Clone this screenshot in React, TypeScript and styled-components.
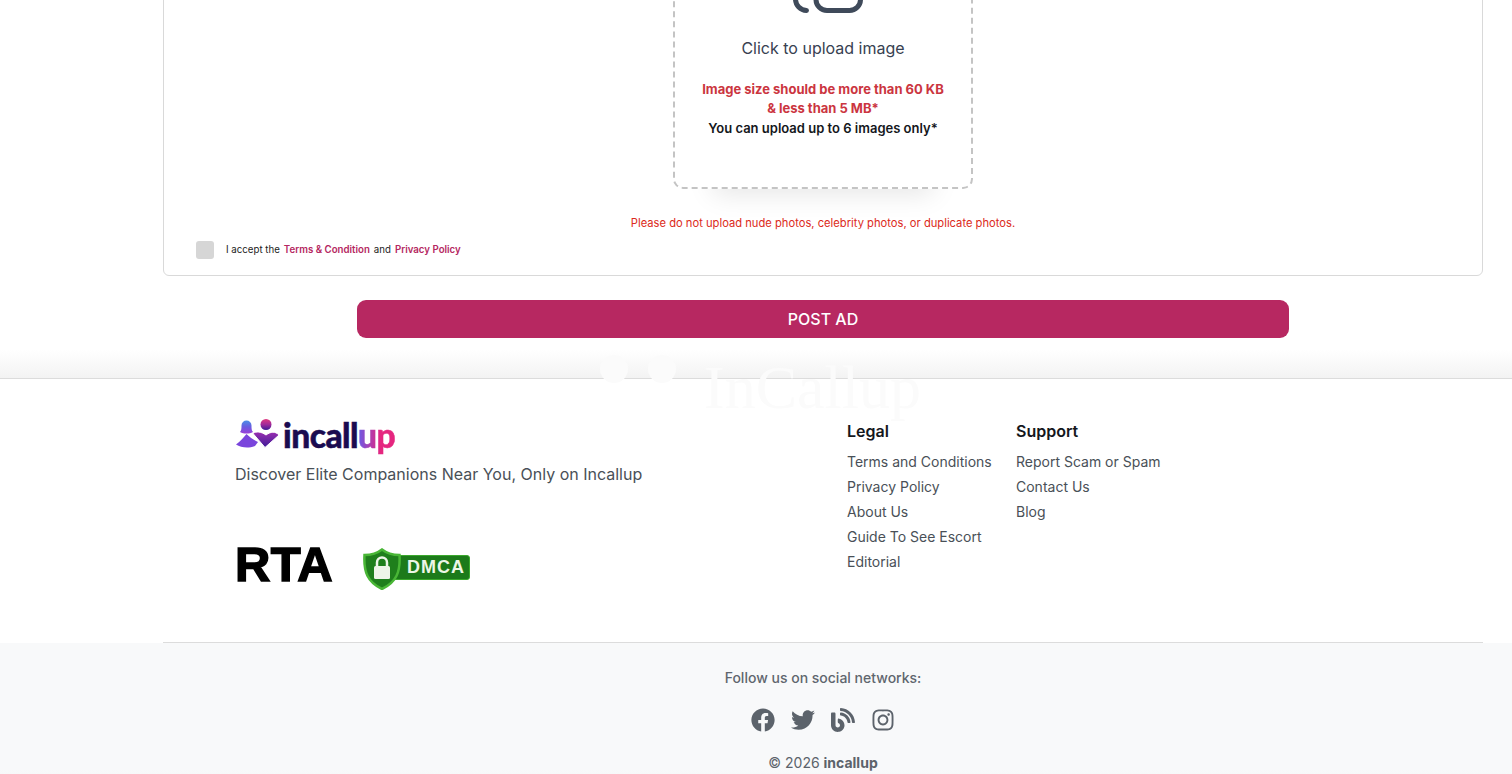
import React from "react";
import styled, { createGlobalStyle } from "styled-components";
import { FaFacebook, FaTwitter, FaBlog, FaInstagram } from "react-icons/fa";

const Global = createGlobalStyle`
  html, body { margin: 0; padding: 0; background: #fff; overflow: hidden; }
  body { font-family: Inter, "Liberation Sans", sans-serif; }
  * { box-sizing: border-box; }
`;

const Page = styled.div`
  height: 774px;
  overflow: hidden;
  background: #fff;
`;

const Main = styled.main`
  margin: -100px 29px 0 163px;
`;

const Panel = styled.section`
  height: 376px;
  border: 1px solid #d9d9d9;
  border-radius: 6px;
  padding: 0 32px;
  display: flex;
  flex-direction: column;
`;

const UploadBox = styled.div`
  align-self: center;
  width: 300px;
  height: 288px;
  flex: none;
  border: 2px dashed #c4c4c4;
  border-radius: 10px;
  box-shadow: 0 45px 25px -40px rgba(0, 0, 0, 0.1);
  display: flex;
  flex-direction: column;
  align-items: center;
  text-align: center;
  padding: 0 24px;
`;

const UploadIcon = styled.svg`
  width: 80px;
  height: 80px;
  margin-top: 38px;
  flex: none;
  color: #3f4a5a;
`;

const UploadLabel = styled.div`
  margin-top: 15px;
  font-size: 16px;
  line-height: 24px;
  color: #374151;
`;

const SizeNote = styled.div`
  margin-top: 20px;
  font-size: 13px;
  font-weight: 700;
  line-height: 19px;
  color: #cb3540;
`;

const CountNote = styled.div`
  margin-top: 1px;
  font-size: 13px;
  font-weight: 600;
  line-height: 19.500px;
  color: #14171c;
`;

const Warning = styled.p`
  margin: 26px 0 0;
  text-align: center;
  font-size: 11.200px;
  line-height: 16px;
  color: #dc2a20;
`;

const Consent = styled.label`
  margin-top: 10px;
  display: flex;
  align-items: center;
  gap: 12px;
  font-size: 9.700px;
  color: #222;
`;

const Check = styled.span`
  width: 18px;
  height: 18px;
  border-radius: 3px;
  background: #d6d6d6;
`;

const ConsentText = styled.span`
  display: flex;
  gap: 4px;
  line-height: 12px;
`;

const ConsentLink = styled.a`
  color: #b52761;
  font-weight: 600;
`;

const PostButton = styled.button`
  display: block;
  width: 932px;
  height: 38px;
  margin: 24px auto 0;
  border: 0;
  border-radius: 9px;
  background: #b72861;
  color: #fff;
  font: 500 16px Inter, sans-serif;
`;

const Band = styled.div`
  height: 40px;
  background: linear-gradient(to bottom, #fff 30%, #f3f3f3 100%);
`;

const FooterWrap = styled.footer`
  position: relative;
  border-top: 1px solid #dcdcdc;
`;

const Watermark = styled.div`
  position: absolute;
  left: 600px;
  top: -24px;
  display: flex;
  align-items: flex-start;
  color: #fbfbfb;
`;

const Head = styled.span<{ $gap: number }>`
  width: 28px;
  height: 28px;
  border-radius: 50%;
  background: #fbfbfb;
  margin-right: ${(p) => p.$gap}px;
`;

const WatermarkText = styled.span`
  font: 62px/70px "Liberation Serif", serif;
  margin-top: -3px;
`;

const FooterTop = styled.div`
  position: relative;
  height: 263px;
  padding: 37px 0 0 235px;
  display: flex;
`;

const Brand = styled.div`
  width: 612px;
  flex: none;
`;

const Logo = styled.div`
  display: flex;
  align-items: center;
  height: 38px;
  gap: 4px;
`;

const LogoMark = styled.svg`
  width: 44px;
  height: 32px;
  flex: none;
`;

const LogoWord = styled.span`
  font: 900 33.500px/38px Lato, Inter, sans-serif;
  letter-spacing: -0.5px;
  color: #1b0b50;
  -webkit-text-stroke: 0.5px #1b0b50;
`;

const LogoUp = styled.span`
  background: linear-gradient(90deg, #6a5be8 0%, #e5267f 60%);
  -webkit-background-clip: text;
  background-clip: text;
  color: transparent;
  -webkit-text-stroke: 0.5px transparent;
`;

const Tagline = styled.p`
  margin: 8px 0 0;
  font-size: 16px;
  line-height: 24px;
  color: #495057;
`;

const Badges = styled.div`
  margin-top: 52px;
  display: flex;
  align-items: center;
  gap: 27px;
`;

const Rta = styled.span`
  font: 900 49px/40px "Liberation Sans", sans-serif;
  color: #000;
  letter-spacing: 0.3px;
  -webkit-text-stroke: 1.500px #000;
  width: 100px;
`;

const Dmca = styled.div`
  position: relative;
  width: 108px;
  height: 42px;
  margin-top: 10px;
`;

const DmcaTag = styled.span`
  position: absolute;
  left: 20px;
  top: 7px;
  right: 0;
  height: 25px;
  background: #1c7a1a;
  border: 1.500px solid #3aa82c;
  border-radius: 3px;
  color: #edf6e6;
  font: 700 18px/23px "Liberation Sans", sans-serif;
  padding-left: 24px;
  letter-spacing: 1px;
`;

const Shield = styled.svg`
  position: absolute;
  left: 0;
  top: 0;
  width: 40px;
  height: 42px;
`;

const LinkColumn = styled.nav<{ $w: number }>`
  width: ${(p) => p.$w}px;
  flex: none;
`;

const ColumnTitle = styled.h4`
  margin: 1px 0 4px;
  font-size: 16px;
  font-weight: 600;
  line-height: 28px;
  color: #14171c;
`;

const FooterLink = styled.a`
  display: block;
  font-size: 14px;
  line-height: 25px;
  color: #495057;
`;

const Rule = styled.div`
  margin: 0 29px 0 163px;
  height: 1px;
  background: #dcdcdc;
`;

const FooterBottom = styled.div`
  background: linear-gradient(to bottom, #f8f9fa 90%, #f6f7f8 100%);
  height: 140px;
  padding-left: 163px;
  padding-right: 29px;
  padding-top: 25px;
  display: flex;
  flex-direction: column;
  align-items: center;
`;

const Follow = styled.div`
  font-size: 14px;
  font-weight: 500;
  line-height: 20px;
  color: #5f666e;
`;

const Socials = styled.div`
  margin-top: 20px;
  display: flex;
  gap: 16px;
  color: #5c636b;
`;

const Copy = styled.div`
  margin-top: 21px;
  font-size: 14px;
  line-height: 20px;
  color: #5c636b;
`;

export default function App() {
  return (
    <Page>
      <Global />
      <Main>
        <Panel>
          <UploadBox>
            <UploadIcon viewBox="0 0 80 80" fill="none" stroke="currentColor" strokeWidth="5" strokeLinecap="round">
              <rect x="33" y="20" width="44.500" height="49.500" rx="11" />
              <path d="M12.500 35v23a11.500 11.500 0 0 0 11 11.500" />
            </UploadIcon>
            <UploadLabel>Click to upload image</UploadLabel>
            <SizeNote>Image size should be more than 60 KB &amp; less than 5 MB*</SizeNote>
            <CountNote>You can upload up to 6 images only*</CountNote>
          </UploadBox>
          <Warning>Please do not upload nude photos, celebrity photos, or duplicate photos.</Warning>
          <Consent>
            <Check />
            <ConsentText>
              I accept the <ConsentLink>Terms &amp; Condition</ConsentLink> and <ConsentLink>Privacy Policy</ConsentLink>
            </ConsentText>
          </Consent>
        </Panel>
        <PostButton>POST AD</PostButton>
      </Main>
      <Band />
      <FooterWrap>
        <Watermark>
          <Head $gap={20} />
          <Head $gap={28} />
          <WatermarkText>InCallup</WatermarkText>
        </Watermark>
        <FooterTop>
          <Brand>
            <Logo>
              <LogoMark viewBox="0 0 44 32">
                <defs>
                  <linearGradient id="lg1" x1="0" y1="0" x2="0" y2="1">
                    <stop offset="0" stopColor="#4a8fe6" />
                    <stop offset="0.500" stopColor="#6a5be0" />
                    <stop offset="1" stopColor="#9a3fd8" />
                  </linearGradient>
                  <linearGradient id="lg2" x1="0" y1="0" x2="0" y2="1">
                    <stop offset="0" stopColor="#e0387f" />
                    <stop offset="0.500" stopColor="#a02a9a" />
                    <stop offset="1" stopColor="#3e1b98" />
                  </linearGradient>
                  <linearGradient id="lg3" x1="0" y1="0" x2="0" y2="1">
                    <stop offset="0" stopColor="#9a2fb0" />
                    <stop offset="1" stopColor="#3e1b98" />
                  </linearGradient>
                </defs>
                <path d="M5 13c1.500-1.500 1.500-4 1.500-6.500a5 5 0 0 1 10 0c0 2.500 0 5 1.500 6.500-2 1-4 1.500-6.500 1.500S7 14 5 13Z" fill="url(#lg1)" />
                <path d="M11.500 15C8 19 5 22.500 1 25.500c3 2 7 3 11 3 2.500 0 5-.5 8-1.500l3-4c-4-2-8-4.500-11.500-8Z" fill="#7a45dc" />
                <circle cx="31" cy="5.500" r="5.500" fill="url(#lg2)" />
                <path d="M18 14.500c3-2.500 8-2 13 1.500 5-3.500 9-4 13 0L30 28.500Z" fill="url(#lg3)" stroke="#fff" strokeWidth="1" />
              </LogoMark>
              <LogoWord>incall<LogoUp>up</LogoUp></LogoWord>
            </Logo>
            <Tagline>Discover Elite Companions Near You, Only on Incallup</Tagline>
            <Badges>
              <Rta>RTA</Rta>
              <Dmca>
                <DmcaTag>DMCA</DmcaTag>
                <Shield viewBox="0 0 40 42">
                  <path d="M20 1.500c5 4 10 5.500 17.500 5.500 1 17-3 27-17.500 34C5.500 34 1.500 24 2.500 7 10 7 15 5.500 20 1.500Z" fill="#1f7f1c" stroke="#49b636" strokeWidth="2.500" />
                  <rect x="12" y="18" width="16" height="13" rx="1.500" fill="#eef5e8" />
                  <path d="M15 18v-3.500a5 5 0 0 1 10 0V18" fill="none" stroke="#eef5e8" strokeWidth="2.500" />
                </Shield>
              </Dmca>
            </Badges>
          </Brand>
          <LinkColumn $w={169}>
            <ColumnTitle>Legal</ColumnTitle>
            <FooterLink>Terms and Conditions</FooterLink>
            <FooterLink>Privacy Policy</FooterLink>
            <FooterLink>About Us</FooterLink>
            <FooterLink>Guide To See Escort</FooterLink>
            <FooterLink>Editorial</FooterLink>
          </LinkColumn>
          <LinkColumn $w={180}>
            <ColumnTitle>Support</ColumnTitle>
            <FooterLink>Report Scam or Spam</FooterLink>
            <FooterLink>Contact Us</FooterLink>
            <FooterLink>Blog</FooterLink>
          </LinkColumn>
        </FooterTop>
        <Rule />
        <FooterBottom>
          <Follow>Follow us on social networks:</Follow>
          <Socials>
            <FaFacebook size={24} />
            <FaTwitter size={24} />
            <FaBlog size={24} />
            <FaInstagram size={24} />
          </Socials>
          <Copy>© 2026 <b>incallup</b></Copy>
        </FooterBottom>
      </FooterWrap>
    </Page>
  );
}
